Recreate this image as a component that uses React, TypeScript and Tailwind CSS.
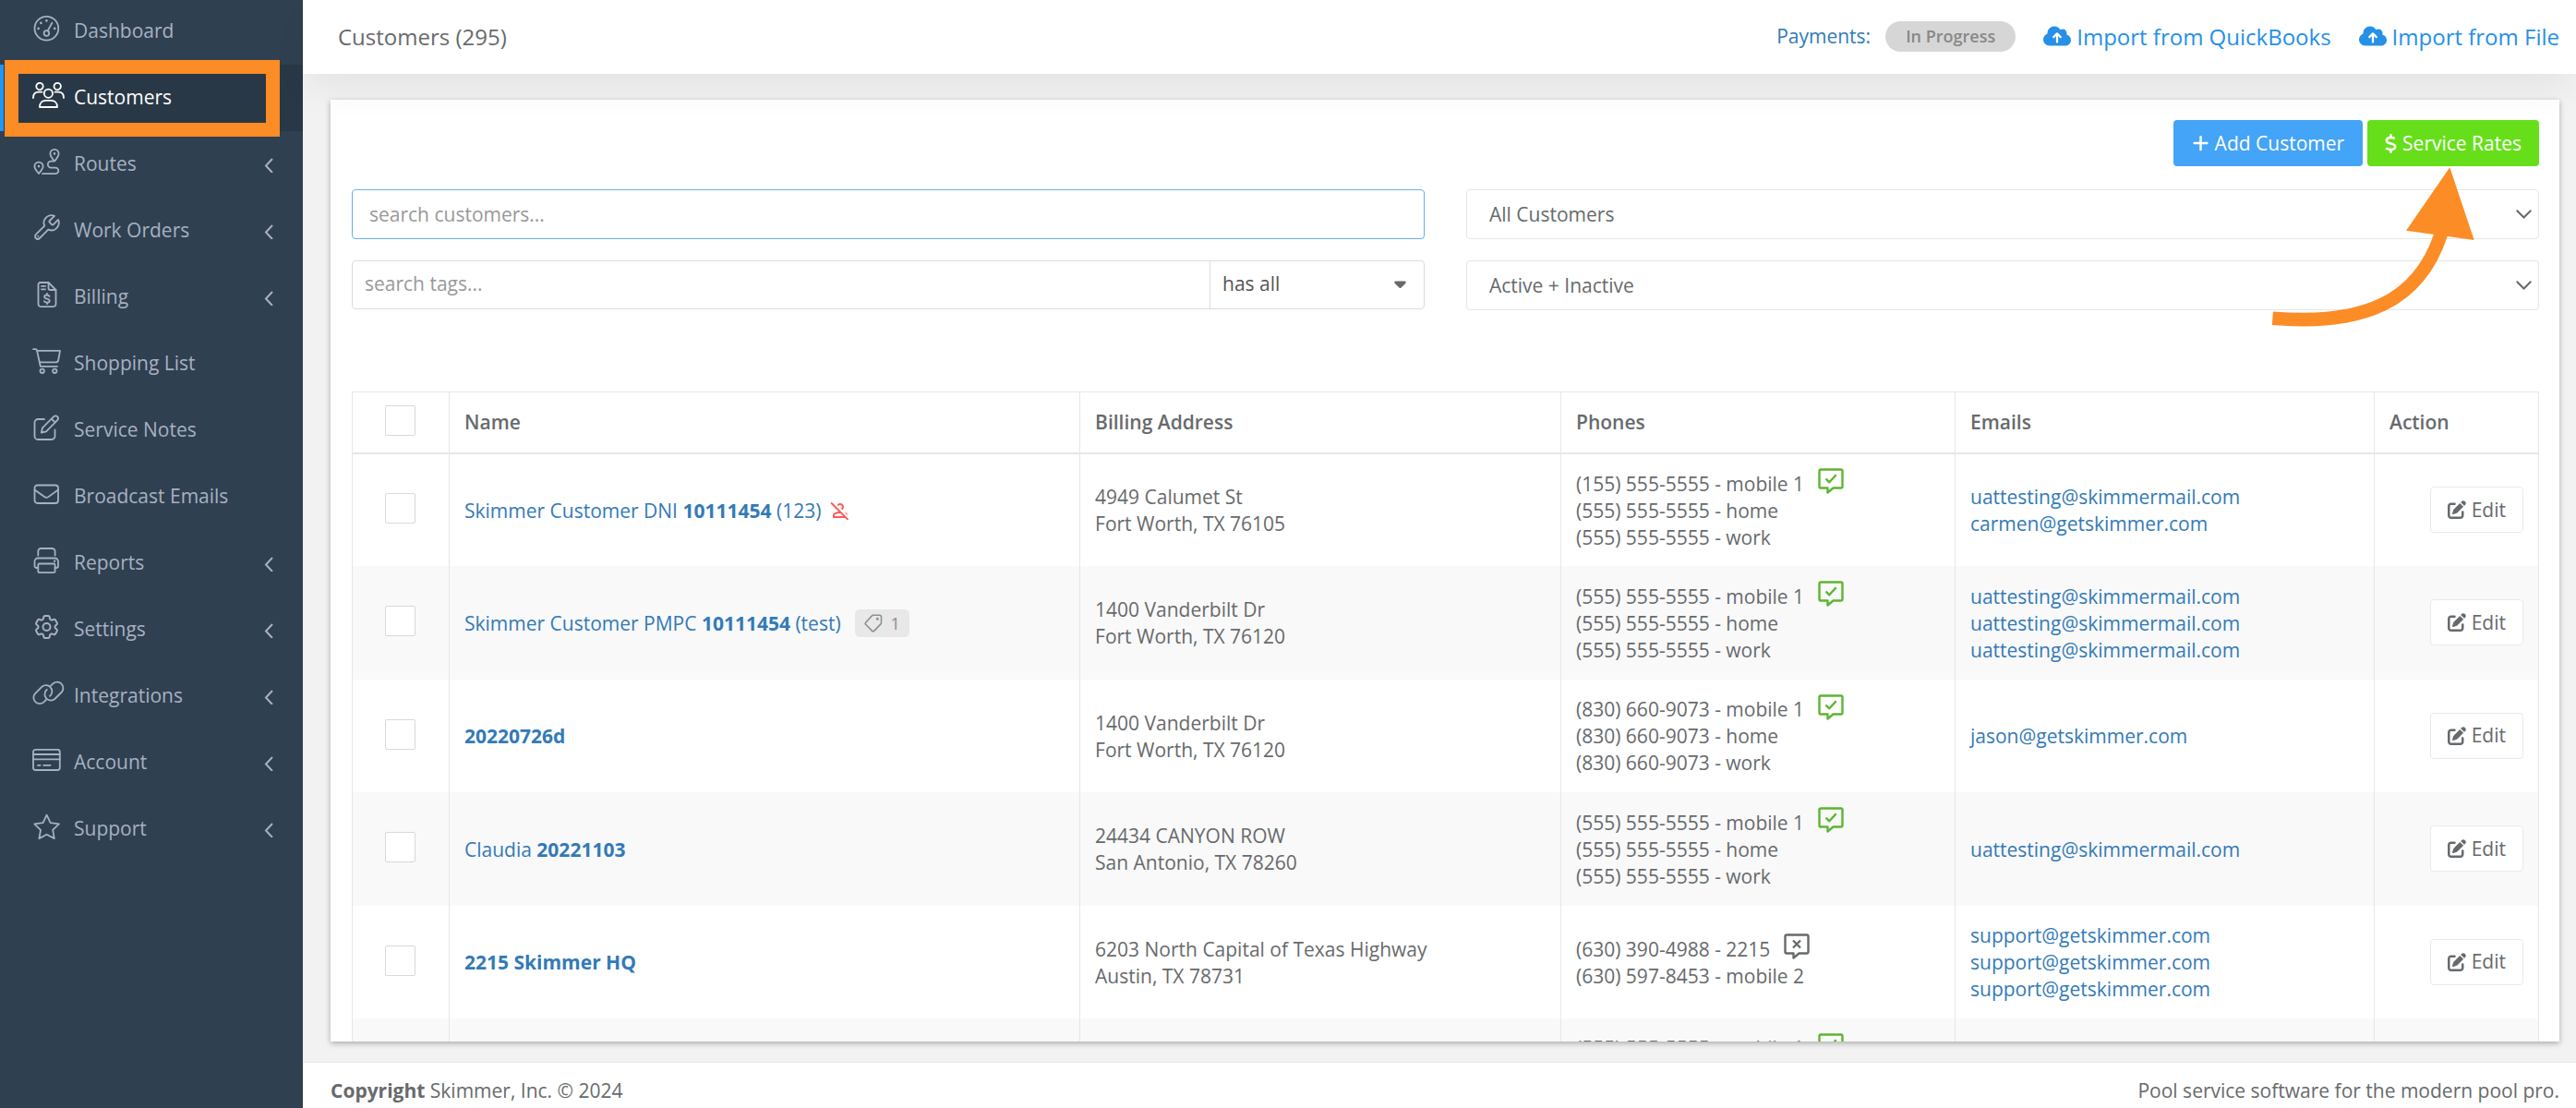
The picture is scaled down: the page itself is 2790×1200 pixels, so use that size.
import type { ReactNode } from "react";
import { HiOutlineCog6Tooth } from "react-icons/hi2";
import { FaCaretDown, FaCloudArrowUp, FaDollarSign, FaPenToSquare, FaPlus } from "react-icons/fa6";
import { MdOutlinePersonOff } from "react-icons/md";

type NavItem = { label: string; icon: ReactNode; active?: boolean; expandable?: boolean };

const navItems: NavItem[] = [
  {
    label: "Dashboard",
    icon: (
      <>
        <circle cx="16.4" cy="13.8" r="12.9" />
        <circle cx="16.4" cy="19" r="2.8" />
        <path d="M17.6 16.4 22.4 7.8" />
        <path d="M16.4 5.4v.1M10.4 7.9v.1M7.6 13.9v.1M25.2 13.9v.1" strokeWidth="2.6" />
      </>
    ),
  },
  {
    label: "Customers",
    active: true,
    icon: (
      <>
        <circle cx="9" cy="4.6" r="3.7" />
        <circle cx="28.2" cy="4.6" r="3.7" />
        <circle cx="18.4" cy="12.2" r="4.6" />
        <path d="M2 17c0-4 2.5-6.3 6-6.3h3.5M35 17c0-4-2.5-6.3-6-6.3h-3.5" />
        <path d="M9 27h19c0-4.6-3-7.2-6.4-7.2h-6.2C12 19.8 9 22.4 9 27Z" />
      </>
    ),
  },
  {
    label: "Routes",
    expandable: true,
    icon: (
      <>
        <path d="M25 13.6c-3-3.6-4.6-6-4.6-8.2a4.6 4.6 0 0 1 9.2 0c0 2.2-1.6 4.6-4.6 8.2Z" />
        <path d="M8 27c-3-3.5-4.6-5.6-4.6-7.8a4.6 4.6 0 0 1 9.2 0c0 2.2-1.6 4.3-4.6 7.8Z" />
        <path d="M25 5.3v.1M8 19v.1" strokeWidth="2.6" />
        <path d="M23.5 13.6H21.3a3.5 3.5 0 0 0 0 7H26a3.3 3.3 0 0 1 0 6.6H12" />
      </>
    ),
  },
  {
    label: "Work Orders",
    expandable: true,
    icon: (
      <>
        <path
          transform="translate(0 -2.5) scale(1.35)"
          strokeWidth="1.35"
          d="M14.7 6.3a1 1 0 0 0 0 1.4l1.6 1.6a1 1 0 0 0 1.4 0l3.77-3.77a6 6 0 0 1-7.94 7.94l-6.91 6.91a2.12 2.12 0 0 1-3-3l6.91-6.91a6 6 0 0 1 7.94-7.94l-3.76 3.76z"
        />
        <path d="M7.3 22.7v.1" />
      </>
    ),
  },
  {
    label: "Billing",
    expandable: true,
    icon: (
      <>
        <path d="M9.5 1h9l8 8v15.2a3 3 0 0 1-3 3h-13a3 3 0 0 1-3-3V3a2 2 0 0 1 2-2Z" />
        <path d="M18.5 1v6a2 2 0 0 0 2 2h6M11 4.9h4M11 8.3h4" />
        <path d="M19.5 16c-.5-1-1.5-1.5-2.7-1.5-1.5 0-2.7.8-2.7 2 0 2.8 5.6 1.4 5.6 4.2 0 1.3-1.3 2-2.8 2-1.4 0-2.5-.6-3-1.6M16.9 12.9v1.5M16.9 22.7v1.5" />
      </>
    ),
  },
  {
    label: "Shopping List",
    icon: (
      <>
        <path d="M2 1.2h2.6c.8 0 1.2.4 1.4 1.2L9.8 19.8H28" />
        <path d="M6 2.8h25L29.2 13c-.3 1.7-1.2 2.4-2.8 2.4H9" />
        <circle cx="11.7" cy="24.8" r="2.2" />
        <circle cx="25.3" cy="24.8" r="2.2" />
      </>
    ),
  },
  {
    label: "Service Notes",
    icon: (
      <>
        <path d="M14 5H7a3.5 3.5 0 0 0-3.5 3.5v15A3.5 3.5 0 0 0 7 27h15a3.5 3.5 0 0 0 3.5-3.5V16.5" />
        <path d="m10.8 19.5 1.2-5.2L24.2 2.2a2.6 2.6 0 0 1 3.9 3.9L16 18.3ZM21.8 4.6l3.9 3.9" />
      </>
    ),
  },
  {
    label: "Broadcast Emails",
    icon: (
      <>
        <rect x="3.5" y="4.5" width="25.5" height="19.5" rx="3" />
        <path d="m3.5 9.5 10.6 7.6a3.6 3.6 0 0 0 4.3 0L29 9.5" />
      </>
    ),
  },
  {
    label: "Reports",
    expandable: true,
    icon: (
      <>
        <path d="M7.3 8.5V4a3 3 0 0 1 3-3h12.3a3 3 0 0 1 3 3v4.5" />
        <path d="M7.3 22H5.5a2 2 0 0 1-2-2v-5a3.5 3.5 0 0 1 3.5-3.5h18.5A3.5 3.5 0 0 1 29 15v5a2 2 0 0 1-2 2h-1.5" />
        <rect x="7.3" y="17.5" width="18.3" height="9.7" rx="1.5" />
        <path d="M25.2 14.6v.1" strokeWidth="2.4" />
      </>
    ),
  },
  {
    label: "Settings",
    expandable: true,
    icon: <HiOutlineCog6Tooth x="0.5" y="-2" size={32} />,
  },
  {
    label: "Integrations",
    expandable: true,
    icon: (
      <>
        <path d="M16 20.8 13.2 23.6a6.6 6.6 0 0 1-9.3-9.3L11.5 6.7a6.6 6.6 0 0 1 9.3 9.3l-.8.8" />
        <path d="M20.8 5.9 23.6 3.200a6.600 6.600 0 0 1 9.300 9.300L25.300 20a6.600 6.600 0 0 1-9.300-9.300l.8-.8" />
      </>
    ),
  },
  {
    label: "Account",
    expandable: true,
    icon: (
      <>
        <rect x="2" y="2.8" width="28.8" height="22.2" rx="2.5" />
        <path d="M2 8h28.8M2 13.4h28.8M7 19.8h2.6M13.2 19.8h7.4" />
      </>
    ),
  },
  {
    label: "Support",
    expandable: true,
    icon: (
      <path d="m16.6 1.6 4 8.5 9.3 1.3-6.7 6.5 1.6 9.2-8.2-4.4-8.2 4.4L10 17.9l-6.7-6.5 9.3-1.3Z" />
    ),
  },
];

type Customer = {
  name: ReactNode;
  dni?: boolean;
  tags?: number;
  address: string[];
  phones: string[];
  canText?: boolean;
  emails: string[];
};

const customers: Customer[] = [
  {
    name: <>Skimmer Customer DNI <b>10111454</b> (123)</>,
    dni: true,
    address: ["4949 Calumet St", "Fort Worth, TX 76105"],
    phones: ["(155) 555-5555 - mobile 1", "(555) 555-5555 - home", "(555) 555-5555 - work"],
    canText: true,
    emails: ["uattesting@skimmermail.com", "carmen@getskimmer.com"],
  },
  {
    name: <>Skimmer Customer PMPC <b>10111454</b> (test)</>,
    tags: 1,
    address: ["1400 Vanderbilt Dr", "Fort Worth, TX 76120"],
    phones: ["(555) 555-5555 - mobile 1", "(555) 555-5555 - home", "(555) 555-5555 - work"],
    canText: true,
    emails: ["uattesting@skimmermail.com", "uattesting@skimmermail.com", "uattesting@skimmermail.com"],
  },
  {
    name: <b>20220726d</b>,
    address: ["1400 Vanderbilt Dr", "Fort Worth, TX 76120"],
    phones: ["(830) 660-9073 - mobile 1", "(830) 660-9073 - home", "(830) 660-9073 - work"],
    canText: true,
    emails: ["jason@getskimmer.com"],
  },
  {
    name: <>Claudia <b>20221103</b></>,
    address: ["24434 CANYON ROW", "San Antonio, TX 78260"],
    phones: ["(555) 555-5555 - mobile 1", "(555) 555-5555 - home", "(555) 555-5555 - work"],
    canText: true,
    emails: ["uattesting@skimmermail.com"],
  },
  {
    name: <b>2215 Skimmer HQ</b>,
    address: ["6203 North Capital of Texas Highway", "Austin, TX 78731"],
    phones: ["(630) 390-4988 - 2215", "(630) 597-8453 - mobile 2"],
    emails: ["support@getskimmer.com", "support@getskimmer.com", "support@getskimmer.com"],
  },
  {
    name: "",
    address: [],
    phones: ["(555) 555-5555 - mobile 1", "(555) 555-5555 - home", "(555) 555-5555 - work"],
    canText: true,
    emails: [],
  },
];

function Sidebar() {
  return (
    <nav className="w-[328px] shrink-0 bg-[#2f4050] overflow-hidden">
      <ul className="-mt-[2px]">
        {navItems.map((item) => (
          <li key={item.label} className="relative">
            <a
              href="#"
              className={
                item.active
                  ? "flex items-center h-18 pb-[2px] pl-[30px] pr-8 border-l-4 border-[#2196f3] bg-[#293846] text-white"
                  : "flex items-center h-18 pb-[2px] pl-[30px] pr-8 border-l-4 border-transparent text-[#a7b1c2]"
              }
            >
              <svg
                className="w-9 h-7 -mt-1 mr-[10px] overflow-visible"
                viewBox="0 0 36 28"
                fill="none"
                stroke="currentColor"
                strokeWidth="1.8"
                strokeLinecap="round"
                strokeLinejoin="round"
              >
                {item.icon}
              </svg>
              <span className="flex-1">{item.label}</span>
              {item.expandable && (
                <svg className="w-[10px] h-4 mt-1" viewBox="0 0 10 16" fill="none" stroke="currentColor" strokeWidth="2">
                  <path d="M9 1 2 8.5 9 16" />
                </svg>
              )}
            </a>
            {item.active && (
              <div className="absolute left-[5px] -top-[5px] w-[298px] h-[83px] border-[15px] border-[#fc8c26] pointer-events-none" />
            )}
          </li>
        ))}
      </ul>
    </nav>
  );
}

function Header() {
  return (
    <header className="relative z-10 flex items-center justify-between h-20 pb-[2px] pl-[38px] pr-[18px] bg-white shadow-[0_20px_40px_-4px_rgba(20,20,40,0.06)]">
      <h1 className="text-[24px]">Customers (295)</h1>
      <div className="flex items-center text-[24px] text-[#2690e8]">
        <span className="text-[21px] text-[#337ab7]">Payments:</span>
        <span className="ml-4 mr-[30px] px-[22px] h-[33px] leading-[33px] rounded-full bg-[#d6d6d6] text-[18px] font-semibold text-[#888]">
          In Progress
        </span>
        <a href="#" className="flex items-center gap-[6px] mr-[30px]">
          <FaCloudArrowUp className="w-[30px] h-6" />
          Import from QuickBooks
        </a>
        <a href="#" className="flex items-center gap-[6px]">
          <FaCloudArrowUp className="w-[30px] h-6" />
          Import from File
        </a>
      </div>
    </header>
  );
}

function FilterSelect({ label, value }: { label: string; value: string }) {
  return (
    <div className="relative">
      <select
        aria-label={label}
        className="block w-full h-[54px] pl-6 pr-12 border border-[#e5e6e7] rounded-[4px] bg-white appearance-none"
      >
        <option>{value}</option>
      </select>
      <svg
        className="absolute right-2 top-[22px] w-[17px] h-[10px] pointer-events-none"
        viewBox="0 0 17 10"
        fill="none"
        stroke="currentColor"
        strokeWidth="2"
      >
        <path d="m.7.8 7.8 7.7L16.3.8" />
      </svg>
    </div>
  );
}

function Filters() {
  return (
    <div className="relative grid grid-cols-2 gap-x-[45px] gap-y-[23px] mt-[25px]">
      <input
        type="text"
        aria-label="Search customers"
        placeholder="search customers..."
        className="h-[54px] px-[18px] border border-[#66afe9] rounded-[4px] placeholder:text-[#999] outline-none"
      />
      <FilterSelect label="Customer type" value="All Customers" />
      <div className="flex h-[53px] border border-[#dcdcdc] rounded-[4px]">
        <input
          type="text"
          aria-label="Search tags"
          placeholder="search tags..."
          className="flex-1 px-[13px] pb-[2px] placeholder:text-[#999] outline-none"
        />
        <div className="relative w-[232px] border-l border-[#dcdcdc]">
          <select aria-label="Tag match" className="w-full h-full pl-[13px] pb-[2px] appearance-none text-[#555]">
            <option>has all</option>
          </select>
          <FaCaretDown className="absolute right-[18px] top-[14px] w-[15px] h-5 pointer-events-none" />
        </div>
      </div>
      <FilterSelect label="Customer status" value="Active + Inactive" />
      {/* arrow pointing up at the Service Rates button */}
      <svg className="absolute right-[68px] -top-6 w-[224px] h-[174px] pointer-events-none" viewBox="2458 181 224 174">
        <path d="M2461.4 344.7C2560 353 2620 327 2644 253" fill="none" stroke="#fc8c26" strokeWidth="14.7" />
        <path d="M2653.3 181.3 2606 249.7 2679.7 260Z" fill="#fc8c26" />
      </svg>
    </div>
  );
}

function TextStatusIcon({ ok }: { ok?: boolean }) {
  return (
    <svg
      className={ok ? "w-7 h-7 -mt-[6px] ml-[15px] text-[#5cb531]" : "w-7 h-7 -mt-[6px] ml-[15px] text-[#676a6c]"}
      viewBox="0 0 28 28"
      fill="none"
      stroke="currentColor"
      strokeWidth="2.4"
      strokeLinejoin="round"
    >
      <path d="M3 1.5h22a1.5 1.5 0 0 1 1.5 1.5v17a1.5 1.5 0 0 1-1.5 1.5h-8.5l-6 5v-5H3A1.5 1.5 0 0 1 1.5 20V3A1.5 1.5 0 0 1 3 1.5Z" />
      {ok ? <path d="m8.5 11.5 3.8 3.8 7.4-8" /> : <path d="m10 7.5 8 8M18 7.500l-8 8" />}
    </svg>
  );
}

function Checkbox({ label }: { label: string }) {
  return (
    <input
      type="checkbox"
      aria-label={label}
      className="block mx-auto mb-[3px] w-[33px] h-[33px] border border-[#d9d9d9] rounded-[2px] bg-white appearance-none"
    />
  );
}

function CustomerTable() {
  return (
    <table className="w-full mt-[88px] table-fixed border-collapse border border-[#e7e7e7] text-left">
      <thead>
        <tr className="h-[66px] border-b-2 border-[#e7e7e7]">
          <th className="w-[105px] pr-[2px]">
            <Checkbox label="Select all" />
          </th>
          <th className="px-4 border-l border-[#e7e7e7] font-semibold">Name</th>
          <th className="w-[22%] px-4 border-l border-[#e7e7e7] font-semibold">Billing Address</th>
          <th className="w-[427px] px-4 border-l border-[#e7e7e7] font-semibold">Phones</th>
          <th className="w-[454px] px-4 border-l border-[#e7e7e7] font-semibold">Emails</th>
          <th className="w-[178px] px-4 border-l border-[#e7e7e7] font-semibold">Action</th>
        </tr>
      </thead>
      <tbody>
        {customers.map((c, i) => (
          <tr key={i} className="h-[122px] even:h-[123px] even:bg-[#f9f9f9]">
            <td className="pr-[2px]">
              <Checkbox label="Select customer" />
            </td>
            <td className="px-4 pt-[2px] border-l border-[#e7e7e7]">
              <div className="flex items-center">
                <a href="#" className="text-[#337ab7]">{c.name}</a>
                {c.dni && <MdOutlinePersonOff className="ml-[9px] w-6 h-6 text-[#ff5a5a]" />}
                {c.tags && (
                  <span className="flex items-center gap-[9px] ml-[15px] px-[10px] h-[30px] rounded-[5px] bg-[#e8e8e8] text-[18px] text-[#8f8f8f]">
                    <svg className="w-5 h-5" viewBox="0 0 20 20" fill="none" stroke="currentColor" strokeWidth="1.6">
                      <path d="M9.8 1.3H16.5a2 2 0 0 1 2 2V9.5a2 2 0 0 1-.6 1.4l-7 7.2a1.8 1.8 0 0 1-2.5 0l-6.6-6.6a1.8 1.8 0 0 1 0-2.5l6.6-7.1a2 2 0 0 1 1.4-.6Z" />
                      <circle cx="14.3" cy="5.3" r=".7" fill="currentColor" />
                    </svg>
                    {c.tags}
                  </span>
                )}
              </div>
            </td>
            <td className="px-4 pt-[2px] border-l border-[#e7e7e7]">
              {c.address.map((line) => (
                <div key={line}>{line}</div>
              ))}
            </td>
            <td className="px-4 pt-[2px] border-l border-[#e7e7e7]">
              {c.phones.map((phone, n) => (
                <div key={n} className="flex items-center h-[29px]">
                  {phone}
                  {n === 0 && <TextStatusIcon ok={c.canText} />}
                </div>
              ))}
            </td>
            <td className="px-4 pt-[2px] border-l border-[#e7e7e7]">
              {c.emails.map((email, n) => (
                <a key={n} href="#" className="block text-[#337ab7]">{email}</a>
              ))}
            </td>
            <td className="px-4 border-l border-[#e7e7e7]">
              <button className="flex items-center gap-[6px] ml-auto px-[18px] h-[50px] border border-[#e7eaec] rounded-[4px] bg-white">
                <FaPenToSquare className="w-5 h-5" />
                Edit
              </button>
            </td>
          </tr>
        ))}
      </tbody>
    </table>
  );
}

export default function App() {
  return (
    <div className="flex h-screen bg-[#f2f2f2] font-['Open_Sans',sans-serif] text-[21px] leading-[29px] text-[#676a6c]">
      <Sidebar />
      <div className="flex flex-col flex-1 min-w-0">
        <Header />
        <main className="flex-1 min-h-0 mt-7 mb-[22px] ml-[30px] mr-[18px] pl-[23px] pr-[22px] pt-[22px] bg-white overflow-hidden shadow-[0_2px_6px_rgba(0,0,0,0.3)]">
          <div className="flex justify-end gap-[5px] text-white">
            <button className="flex items-center gap-[6px] px-5 h-[50px] rounded-[4px] bg-[#44a4f7]">
              <FaPlus className="w-[19px] h-5" />
              Add Customer
            </button>
            <button className="flex items-center gap-[6px] px-[19px] h-[50px] rounded-[4px] bg-[#66df1a]">
              <FaDollarSign className="w-[13px] h-[21px]" />
              Service Rates
            </button>
          </div>
          <Filters />
          <CustomerTable />
        </main>
        <footer className="flex justify-between pt-4 pb-1 pl-[30px] pr-[18px] border-t border-[#e7eaec] bg-white">
          <div>
            <b>Copyright</b> Skimmer, Inc. © 2024
          </div>
          <div>Pool service software for the modern pool pro.</div>
        </footer>
      </div>
    </div>
  );
}
